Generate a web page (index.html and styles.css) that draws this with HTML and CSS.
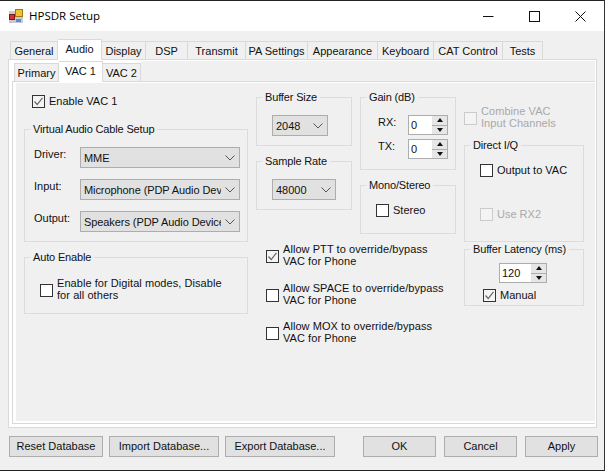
FILE: index.html
```html
<!DOCTYPE html>
<html lang="en">
<head>
<meta charset="utf-8">
<title>HPSDR Setup</title>
<link rel="stylesheet" href="styles.css">
</head>
<body>
<div class="window">
  <header class="titlebar">
    <svg class="app-icon" width="14" height="14" viewBox="0 0 14 14">
      <rect x="0" y="2" width="14" height="12" fill="#c8c8d0"/>
      <rect x="6.5" y="0.5" width="7" height="7" fill="#f2c230" stroke="#a07810"/>
      <rect x="0.5" y="5.5" width="5" height="5" fill="#d8322a" stroke="#7a1a18"/>
      <rect x="7" y="10" width="5" height="3" fill="#5a8ad8"/>
    </svg>
    <span class="title">HPSDR Setup</span>
    <div class="winctl">
      <svg width="11" height="11" viewBox="0 0 11 11"><path d="M0 5.5H10.5" stroke="#111" fill="none"/></svg>
      <svg width="11" height="11" viewBox="0 0 11 11"><rect x="0.5" y="0.5" width="10" height="10" stroke="#111" fill="none"/></svg>
      <svg width="11" height="11" viewBox="0 0 11 11"><path d="M0.5 0.5L10.5 10.5M10.5 0.5L0.5 10.5" stroke="#111" fill="none"/></svg>
    </div>
  </header>

  <main class="client">
    <nav class="tabs outer-tabs">
      <span class="tab w48">General</span>
      <span class="tab active w44">Audio</span>
      <span class="tab w44">Display</span>
      <span class="tab w42">DSP</span>
      <span class="tab w58">Transmit</span>
      <span class="tab w62">PA Settings</span>
      <span class="tab w70">Appearance</span>
      <span class="tab w56">Keyboard</span>
      <span class="tab w69">CAT Control</span>
      <span class="tab w40">Tests</span>
    </nav>
    <section class="outer-panel">
      <nav class="tabs inner-tabs">
        <span class="tab w45">Primary</span>
        <span class="tab active w44">VAC 1</span>
        <span class="tab w38">VAC 2</span>
        <span class="tab-fill"></span>
      </nav>
      <div class="inner-panel">
        <div class="page">
          <div class="col col-left">
            <label class="check enable-vac">
              <span class="box checked"><svg width="11" height="11" viewBox="0 0 11 11"><path d="M1.5 5.5L4.2 8.5L9.5 1.8" stroke="#666" stroke-width="1.2" fill="none"/></svg></span>
              <span>Enable VAC 1</span>
            </label>
            <div class="group g-cable">
              <span class="legend">Virtual Audio Cable Setup</span>
              <div class="field"><span class="field-label">Driver:</span><div class="combo wide"><span class="combo-text">MME</span><svg class="chev" width="10" height="6" viewBox="0 0 10 6"><path d="M0.5 0.5L5 5L9.5 0.5" stroke="#555" fill="none"/></svg></div></div>
              <div class="field"><span class="field-label">Input:</span><div class="combo wide"><span class="combo-text">Microphone (PDP Audio Dev</span><svg class="chev" width="10" height="6" viewBox="0 0 10 6"><path d="M0.5 0.5L5 5L9.5 0.5" stroke="#555" fill="none"/></svg></div></div>
              <div class="field"><span class="field-label">Output:</span><div class="combo wide"><span class="combo-text">Speakers (PDP Audio Device</span><svg class="chev" width="10" height="6" viewBox="0 0 10 6"><path d="M0.5 0.5L5 5L9.5 0.5" stroke="#555" fill="none"/></svg></div></div>
            </div>
            <div class="group g-auto">
              <span class="legend">Auto Enable</span>
              <label class="check two-line auto-check">
                <span class="box"></span>
                <span>Enable for Digital modes, Disable<br>for all others</span>
              </label>
            </div>
          </div>

          <div class="col col-mid">
            <div class="mid-top">
              <div class="sub">
                <div class="group g-buffer">
                  <span class="legend">Buffer Size</span>
                  <div class="combo c-buffer"><span class="combo-text">2048</span><svg class="chev" width="10" height="6" viewBox="0 0 10 6"><path d="M0.5 0.5L5 5L9.5 0.5" stroke="#555" fill="none"/></svg></div>
                </div>
                <div class="group g-buffer">
                  <span class="legend">Sample Rate</span>
                  <div class="combo c-rate"><span class="combo-text">48000</span><svg class="chev" width="10" height="6" viewBox="0 0 10 6"><path d="M0.5 0.5L5 5L9.5 0.5" stroke="#555" fill="none"/></svg></div>
                </div>
              </div>
              <div class="sub">
                <div class="group g-gain">
                  <span class="legend">Gain (dB)</span>
                  <div class="gain-row"><span class="gain-label">RX:</span><div class="spin s-gain"><span class="spin-val">0</span><span class="spin-btns"><i class="up"></i><i class="down"></i></span></div></div>
                  <div class="gain-row"><span class="gain-label">TX:</span><div class="spin s-gain"><span class="spin-val">0</span><span class="spin-btns"><i class="up"></i><i class="down"></i></span></div></div>
                </div>
                <div class="group g-mono">
                  <span class="legend">Mono/Stereo</span>
                  <label class="check stereo"><span class="box"></span><span>Stereo</span></label>
                </div>
              </div>
            </div>
            <label class="check two-line allow">
              <span class="box checked"><svg width="11" height="11" viewBox="0 0 11 11"><path d="M1.5 5.5L4.2 8.5L9.5 1.8" stroke="#666" stroke-width="1.2" fill="none"/></svg></span>
              <span>Allow PTT to override/bypass<br>VAC for Phone</span>
            </label>
            <label class="check two-line allow a-space">
              <span class="box"></span>
              <span>Allow SPACE to override/bypass<br>VAC for Phone</span>
            </label>
            <label class="check two-line allow a-mox">
              <span class="box"></span>
              <span>Allow MOX to override/bypass<br>VAC for Phone</span>
            </label>
          </div>

          <div class="col col-right">
            <label class="check two-line combine disabled">
              <span class="box"></span>
              <span>Combine VAC<br>Input Channels</span>
            </label>
            <div class="group g-direct">
              <span class="legend">Direct I/Q</span>
              <label class="check out-vac"><span class="box"></span><span>Output to VAC</span></label>
              <label class="check use-rx2 disabled"><span class="box"></span><span>Use RX2</span></label>
            </div>
            <div class="group g-latency">
              <span class="legend">Buffer Latency (ms)</span>
              <div class="spin s-latency"><span class="spin-val">120</span><span class="spin-btns"><i class="up"></i><i class="down"></i></span></div>
              <label class="check manual">
                <span class="box checked"><svg width="11" height="11" viewBox="0 0 11 11"><path d="M1.5 5.5L4.2 8.5L9.5 1.8" stroke="#666" stroke-width="1.2" fill="none"/></svg></span>
                <span>Manual</span>
              </label>
            </div>
          </div>
        </div>
      </div>
    </section>
    <footer class="actions">
      <button class="btn b-reset">Reset Database</button>
      <button class="btn b-db">Import Database...</button>
      <button class="btn b-db">Export Database...</button>
      <span class="spacer"></span>
      <button class="btn b-main">OK</button>
      <button class="btn b-main">Cancel</button>
      <button class="btn b-main">Apply</button>
    </footer>
  </main>
</div>
</body>
</html>
```

FILE: styles.css
```css
* { box-sizing: border-box; }
html, body { margin: 0; padding: 0; }
body {
  width: 605px;
  height: 471px;
  overflow: hidden;
  font-family: "Liberation Sans", Arial, sans-serif;
  font-size: 11px;
  line-height: 12px;
  color: #111;
  background: #f0f0f0;
}
.window {
  width: 605px;
  height: 471px;
  border-top: 1px solid #222;
  border-right: 1px solid #333;
  border-bottom: 1px solid #222;
  display: flex;
  flex-direction: column;
}
.titlebar {
  height: 30px;
  flex: none;
  background: #fff;
  display: flex;
  align-items: center;
  padding-left: 9px;
}
.app-icon { flex: none; }
.title {
  margin-left: 6px;
  font-family: "Open Sans", sans-serif;
  font-size: 11.5px;
  color: #000;
}
.winctl {
  margin-left: auto;
  margin-right: 18px;
  display: flex;
  gap: 35px;
}
.client {
  flex: 1;
  padding: 8px 7px 0 8px;
  display: flex;
  flex-direction: column;
}

/* tabs */
.tabs { display: flex; align-items: flex-end; flex: none; }
.outer-tabs { height: 20px; padding-left: 2px; }
.inner-tabs { height: 20px; padding-left: 2px; }
.tab {
  height: 18px;
  background: #f0f0f0;
  border: 1px solid #d9d9d9;
  border-bottom: 0;
  border-left-width: 0;
  text-align: center;
  line-height: 18px;
  flex: none;
}
.tabs .tab:first-child { border-left-width: 1px; }
.tab.active {
  height: 21px;
  background: #fff;
  border-left-width: 0;
  position: relative;
  margin-bottom: -1px;
  z-index: 1;
}
.tab-fill { flex: 1; align-self: stretch; background: #f0f0f0; }
.w38 { width: 38px; } .w40 { width: 40px; } .w42 { width: 42px; }
.w44 { width: 44px; } .w45 { width: 45px; } .w48 { width: 48px; }
.w56 { width: 56px; } .w58 { width: 58px; } .w62 { width: 62px; }
.w69 { width: 69px; } .w70 { width: 70px; }

/* panels */
.outer-panel {
  height: 369px;
  flex: none;
  width: 589px;
  border: 1px solid #d9d9d9;
  background: #fff;
  padding: 1px 1px 3px 3px;
}
.inner-panel {
  height: 343px;
  border: 1px solid #d9d9d9;
  border-right: 0;
}
.page {
  height: 341px;
  background: #f0f0f0;
  border-left: 3px solid #fff;
  border-bottom: 2px solid #fff;
  box-shadow: inset 0 1px 0 #fff;
  display: flex;
  padding-left: 8px;
}

.col { flex: none; display: flex; flex-direction: column; }
.col-left { width: 224px; }
.col-mid { width: 200px; margin-left: 8px; }
.col-right { width: 120px; margin-left: 8px; }

/* groups */
.group {
  border: 1px solid #dcdcdc;
  display: block;
}
.legend {
  display: block;
  width: fit-content;
  margin: -8px 0 0 5px;
  padding: 0 3px;
  background: #f0f0f0;
  height: 14px;
  line-height: 14px;
  white-space: nowrap;
  letter-spacing: -0.15px;
}

/* checks */
.check { display: flex; align-items: center; }
.check:not(.two-line) > span:last-child { margin-top: -1px; }
.box {
  flex: none;
  width: 13px;
  height: 13px;
  border: 1px solid #333;
  background: #fff;
  margin-right: 4px;
  display: block;
}
.two-line .box { margin-top: 3px; }
.two-line > span:last-child { letter-spacing: 0.06px; }
.box svg { display: block; }
.box.checked { background: #f4f4f4; }
.disabled { color: #a9a9a9; }
.disabled .box { border-color: #ccc; background: #f4f4f4; }

/* combos */
.combo {
  height: 21px;
  border: 1px solid #adadad;
  background: #e1e1e1;
  display: flex;
  align-items: center;
  padding-left: 3px;
  position: relative;
}
.combo-text { flex: 1; overflow: hidden; white-space: nowrap; margin-right: 18px; }
.chev { position: absolute; right: 4px; top: 7px; }
.combo.wide { width: 160px; margin-left: 9px; letter-spacing: -0.08px; }
.c-buffer { width: 56px; margin: 11px 0 0 15px; }
.c-rate { width: 64px; margin: 11px 0 0 15px; }

/* left column */
.enable-vac { margin: 13px 0 0 8px; height: 13px; }
.g-cable { height: 113px; margin-top: 21px; }
.field { display: flex; align-items: center; height: 21px; margin-top: 11px; }
.field-label { width: 46px; padding-left: 9px; margin-top: -8px; flex: none; }
.g-auto { height: 57px; margin-top: 15px; }
.auto-check { margin: 13px 0 0 15px; }

/* mid column */
.mid-top { display: flex; gap: 8px; height: 146px; margin-top: 15px; }
.sub { display: flex; flex-direction: column; flex: none; width: 96px; }
.g-buffer { height: 49px; }
.g-buffer + .g-buffer { margin-top: 15px; }
.g-gain { height: 73px; }
.gain-row { display: flex; align-items: center; height: 20px; margin-top: 11px; }
.gain-row + .gain-row { margin-top: 4px; }
.gain-label { width: 47px; padding-left: 17px; margin-top: -6px; }
.g-mono { height: 49px; margin-top: 15px; }
.stereo { margin: 12px 0 0 15px; height: 13px; }
.allow { height: 24px; margin-left: 10px; }
.a-space { margin-top: 15px; }
.a-mox { margin-top: 14px; }

/* spin */
.spin {
  border: 1px solid #adadad;
  background: #fff;
  display: flex;
  height: 20px;
  padding-left: 2px;
  line-height: 18px;
}
.spin-val { flex: 1; }
.spin-btns {
  width: 15px;
  display: flex;
  flex-direction: column;
  flex: none;
  background: #adadad;
  gap: 1px;
}
.spin-btns i {
  flex: 1;
  background: #e6e6e6;
  display: flex;
  align-items: center;
  justify-content: center;
}
.spin-btns i::before {
  content: "";
  display: block;
  border-left: 3.5px solid transparent;
  border-right: 3.5px solid transparent;
}
.spin-btns .up::before { border-bottom: 4px solid #111; }
.spin-btns .down::before { border-top: 4px solid #111; }
.s-gain { width: 40px; }
.s-latency { width: 48px; margin: 7px 0 0 34px; }

/* right column */
.combine { margin-top: 23px; height: 24px; }
.g-direct { height: 97px; margin-top: 16px; }
.out-vac { margin: 12px 0 0 15px; height: 13px; }
.use-rx2 { margin: 31px 0 0 15px; height: 13px; }
.g-latency { height: 57px; margin-top: 7px; }
.manual { margin: 6px 0 0 18px; height: 13px; }

/* footer */
.actions {
  flex: none;
  display: flex;
  gap: 6px;
  margin-top: 8px;
  padding-left: 1px;
}
.btn {
  height: 21px;
  padding: 0 0 1px;
  border: 1px solid #adadad;
  background: #e1e1e1;
  font: inherit;
  color: #111;
  flex: none;
}
.b-reset { width: 94px; }
.b-db { width: 110px; }
.b-main { width: 73px; margin-left: 2px; }
.spacer { width: 14px; flex: none; }
```
